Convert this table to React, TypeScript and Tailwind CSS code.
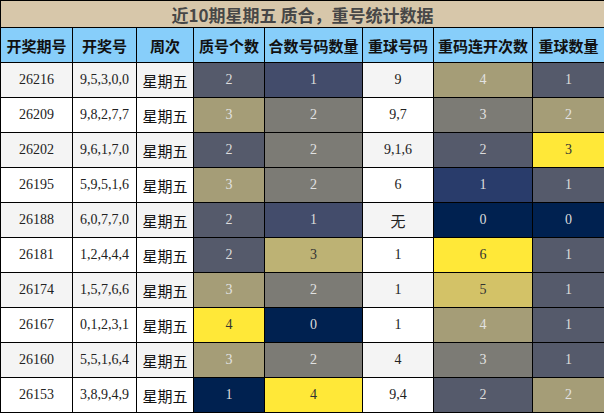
import React from "react";

type C = { v: string; bg: string; fg: string };

const SL = { bg: "bg-[#555a6b]", fg: "text-[#dcdcdc]" };
const NS = { bg: "bg-[#434c6b]", fg: "text-[#dcdcdc]" };
const OL = { bg: "bg-[#a59d77]", fg: "text-[#e2e2e2]" };
const GR = { bg: "bg-[#7c7b75]", fg: "text-[#e2e2e2]" };
const YE = { bg: "bg-[#ffe838]", fg: "text-[#333333]" };
const DN = { bg: "bg-[#002150]", fg: "text-[#dcdcdc]" };
const BL = { bg: "bg-[#293c6b]", fg: "text-[#dcdcdc]" };
const KH = { bg: "bg-[#bdb274]", fg: "text-[#333333]" };
const MU = { bg: "bg-[#d3c267]", fg: "text-[#333333]" };

const c = (v: string, s: { bg: string; fg: string }): C => ({ v, ...s });

const rows: { id: string; nums: string; a: C; b: C; rep: string; d: C; e: C }[] = [
  { id: "26216", nums: "9,5,3,0,0", a: c("2", SL), b: c("1", NS), rep: "9", d: c("4", OL), e: c("1", SL) },
  { id: "26209", nums: "9,8,2,7,7", a: c("3", OL), b: c("2", GR), rep: "9,7", d: c("3", GR), e: c("2", OL) },
  { id: "26202", nums: "9,6,1,7,0", a: c("2", SL), b: c("2", GR), rep: "9,1,6", d: c("2", SL), e: c("3", YE) },
  { id: "26195", nums: "5,9,5,1,6", a: c("3", OL), b: c("2", GR), rep: "6", d: c("1", BL), e: c("1", SL) },
  { id: "26188", nums: "6,0,7,7,0", a: c("2", SL), b: c("1", NS), rep: "无", d: c("0", DN), e: c("0", DN) },
  { id: "26181", nums: "1,2,4,4,4", a: c("2", SL), b: c("3", KH), rep: "1", d: c("6", YE), e: c("1", SL) },
  { id: "26174", nums: "1,5,7,6,6", a: c("3", OL), b: c("2", GR), rep: "1", d: c("5", MU), e: c("1", SL) },
  { id: "26167", nums: "0,1,2,3,1", a: c("4", YE), b: c("0", DN), rep: "1", d: c("4", OL), e: c("1", SL) },
  { id: "26160", nums: "5,5,1,6,4", a: c("3", OL), b: c("2", GR), rep: "4", d: c("3", GR), e: c("1", SL) },
  { id: "26153", nums: "3,8,9,4,9", a: c("1", DN), b: c("4", YE), rep: "9,4", d: c("2", SL), e: c("2", OL) },
];

const headers = ["开奖期号", "开奖号", "周次", "质号个数", "合数号码数量", "重球号码", "重码连开次数", "重球数量"];
const widths = ["w-[72px]", "w-[64px]", "w-[57px]", "w-[71px]", "w-[98px]", "w-[71px]", "w-[99px]", "w-[72px]"];

const serif = "font-['Liberation_Serif','Times_New_Roman',serif]";
const sans = "font-['Noto_Sans_CJK_SC','Noto_Sans',sans-serif]";

export default function App() {
  return (
    <div className="w-[604px] h-[413px] bg-white overflow-hidden">
      <table className="w-[604px] table-fixed border-collapse border border-black">
        <colgroup>
          {widths.map((w, i) => (
            <col key={i} className={w} />
          ))}
        </colgroup>
        <thead>
          <tr>
            <th
              colSpan={8}
              className={`h-[27px] p-0 border border-black bg-[#d7c7aa] text-[#474747] text-[17px] font-bold leading-none text-center ${sans}`}
            >
              近10期星期五 质合，重号统计数据
            </th>
          </tr>
          <tr>
            {headers.map((h) => (
              <th
                key={h}
                className={`h-[35px] p-0 border border-black bg-[#87cefa] text-[#111] text-[15px] font-bold leading-none text-center whitespace-nowrap ${sans}`}
              >
                {h}
              </th>
            ))}
          </tr>
        </thead>
        <tbody>
          {rows.map((r, i) => {
            const rowBg = i % 2 === 0 ? "bg-[#f4f4f4]" : "bg-white";
            const base = "h-[35px] p-0 border border-black text-center leading-none";
            return (
              <tr key={r.id}>
                <td className={`${base} ${rowBg} text-[14px] text-[#222] ${serif}`}>{r.id}</td>
                <td className={`${base} ${rowBg} text-[14px] text-[#222] ${serif}`}>{r.nums}</td>
                <td className={`${base} ${rowBg} text-[15px] text-[#111] ${sans}`}>星期五</td>
                <td className={`${base} ${r.a.bg} ${r.a.fg} text-[14px] ${serif}`}>{r.a.v}</td>
                <td className={`${base} ${r.b.bg} ${r.b.fg} text-[14px] ${serif}`}>{r.b.v}</td>
                <td
                  className={`${base} ${rowBg} text-[#222] ${
                    r.rep === "无" ? `text-[15px] ${sans}` : `text-[14px] ${serif}`
                  }`}
                >
                  {r.rep}
                </td>
                <td className={`${base} ${r.d.bg} ${r.d.fg} text-[14px] ${serif}`}>{r.d.v}</td>
                <td className={`${base} ${r.e.bg} ${r.e.fg} text-[14px] ${serif}`}>{r.e.v}</td>
              </tr>
            );
          })}
        </tbody>
      </table>
    </div>
  );
}
